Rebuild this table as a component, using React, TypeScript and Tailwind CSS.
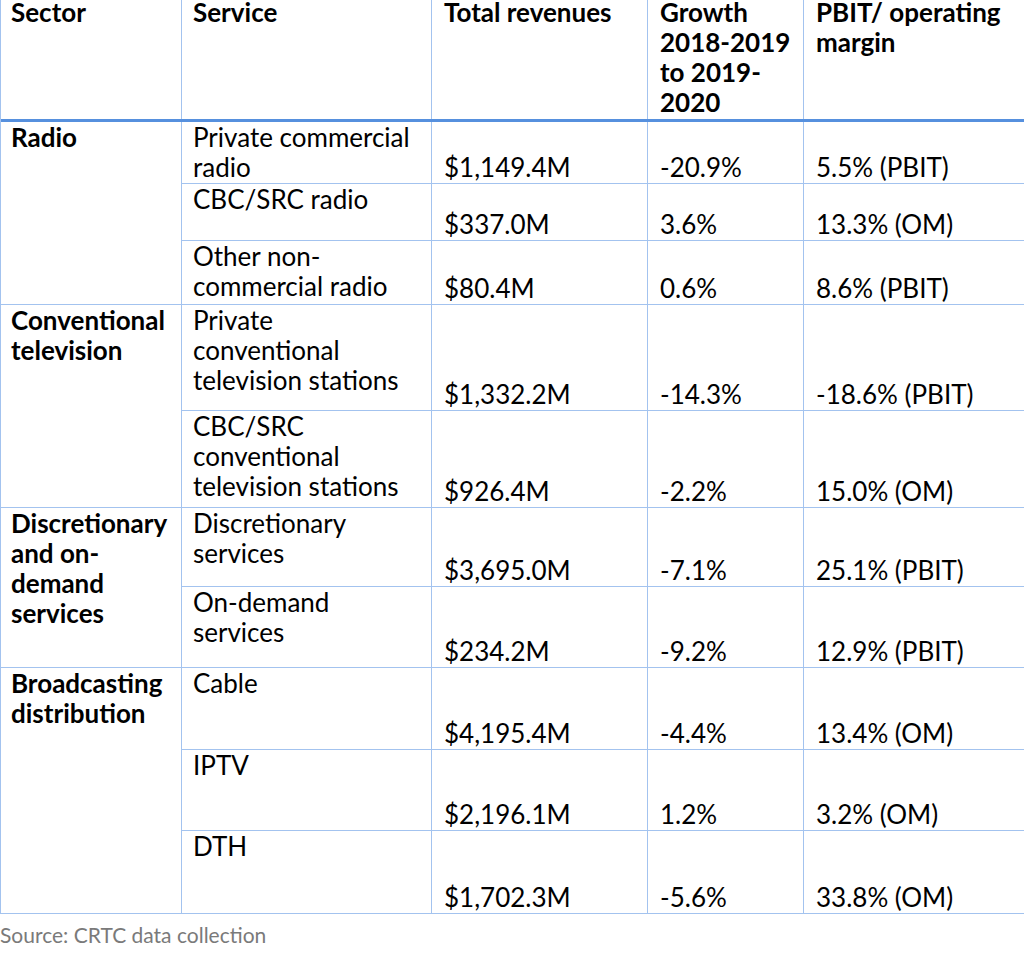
import React from 'react';

type Item = { service: string[]; revenue: string; growth: string; margin: string; h: number };
type Group = { sector: string[]; items: Item[] };

const groups: Group[] = [
  {
    sector: ['Radio'],
    items: [
      { service: ['Private commercial', 'radio'], revenue: '$1,149.4M', growth: '-20.9%', margin: '5.5% (PBIT)', h: 62 },
      { service: ['CBC/SRC radio'], revenue: '$337.0M', growth: '3.6%', margin: '13.3% (OM)', h: 57 },
      { service: ['Other non-', 'commercial radio'], revenue: '$80.4M', growth: '0.6%', margin: '8.6% (PBIT)', h: 64 },
    ],
  },
  {
    sector: ['Conventional', 'television'],
    items: [
      { service: ['Private', 'conventional', 'television stations'], revenue: '$1,332.2M', growth: '-14.3%', margin: '-18.6% (PBIT)', h: 106 },
      { service: ['CBC/SRC', 'conventional', 'television stations'], revenue: '$926.4M', growth: '-2.2%', margin: '15.0% (OM)', h: 97 },
    ],
  },
  {
    sector: ['Discretionary', 'and on-', 'demand', 'services'],
    items: [
      { service: ['Discretionary', 'services'], revenue: '$3,695.0M', growth: '-7.1%', margin: '25.1% (PBIT)', h: 79 },
      { service: ['On-demand', 'services'], revenue: '$234.2M', growth: '-9.2%', margin: '12.9% (PBIT)', h: 81 },
    ],
  },
  {
    sector: ['Broadcasting', 'distribution'],
    items: [
      { service: ['Cable'], revenue: '$4,195.4M', growth: '-4.4%', margin: '13.4% (OM)', h: 82 },
      { service: ['IPTV'], revenue: '$2,196.1M', growth: '1.2%', margin: '3.2% (OM)', h: 81 },
      { service: ['DTH'], revenue: '$1,702.3M', growth: '-5.6%', margin: '33.8% (OM)', h: 83 },
    ],
  },
];

const Lines = ({ lines }: { lines: string[] }) => (
  <>
    {lines.map((l, i) => (
      <div key={i} className="whitespace-nowrap">
        {l}
      </div>
    ))}
  </>
);

// header lines: tighter line boxes with a gap, so the top row sits flush with the page edge
const HeadLines = ({ lines }: { lines: string[] }) => (
  <div className="flex flex-col gap-[6px] leading-[24px]">
    {lines.map((l, i) => (
      <div key={i} className="whitespace-nowrap">
        {l}
      </div>
    ))}
  </div>
);

export default function App() {
  return (
    <div
      className="w-[1024px] h-[958px] overflow-hidden bg-white text-black"
      style={{ fontFamily: 'Lato, "Open Sans", sans-serif' }}
    >
      <div className="w-[1060px] border-l border-[#a3c3ef] text-[26px] leading-[30px]">
        {/* Header */}
        <div className="flex h-[122px] border-b-[3px] border-[#5690de] font-bold">
          <div className="w-[181px] shrink-0 border-r border-[#a3c3ef] pl-[10px]">
            <HeadLines lines={['Sector']} />
          </div>
          <div className="w-[250px] shrink-0 border-r border-[#a3c3ef] pl-[11px]">
            <HeadLines lines={['Service']} />
          </div>
          <div className="w-[216px] shrink-0 border-r border-[#a3c3ef] pl-[12px]">
            <HeadLines lines={['Total revenues']} />
          </div>
          <div className="w-[156px] shrink-0 border-r border-[#a3c3ef] pl-[12px]">
            <HeadLines lines={['Growth', '2018-2019', 'to 2019-', '2020']} />
          </div>
          <div className="flex-1 pl-[12px]">
            <HeadLines lines={['PBIT/ operating', 'margin']} />
          </div>
        </div>

        {/* Body */}
        {groups.map((g, gi) => (
          <div key={gi} className="flex">
            <div className="w-[181px] shrink-0 border-r border-b border-[#a3c3ef] pl-[10px] font-bold">
              <Lines lines={g.sector} />
            </div>
            <div className="flex flex-col">
              {g.items.map((it, ii) => (
                <div key={ii} className="flex border-b border-[#a3c3ef]" style={{ height: it.h }}>
                  <div className="w-[250px] shrink-0 border-r border-[#a3c3ef] pl-[11px]">
                    <Lines lines={it.service} />
                  </div>
                  <div className="w-[216px] shrink-0 border-r border-[#a3c3ef] pl-[12px] pb-[1px] flex items-end">
                    {it.revenue}
                  </div>
                  <div className="w-[156px] shrink-0 border-r border-[#a3c3ef] pl-[12px] pb-[1px] flex items-end">
                    {it.growth}
                  </div>
                  <div className="w-[256px] shrink-0 pl-[12px] pb-[1px] flex items-end">{it.margin}</div>
                </div>
              ))}
            </div>
          </div>
        ))}
      </div>
      <div className="mt-[9px] text-[21px] leading-[24px] text-[#7a7a7a]">Source: CRTC data collection</div>
    </div>
  );
}
